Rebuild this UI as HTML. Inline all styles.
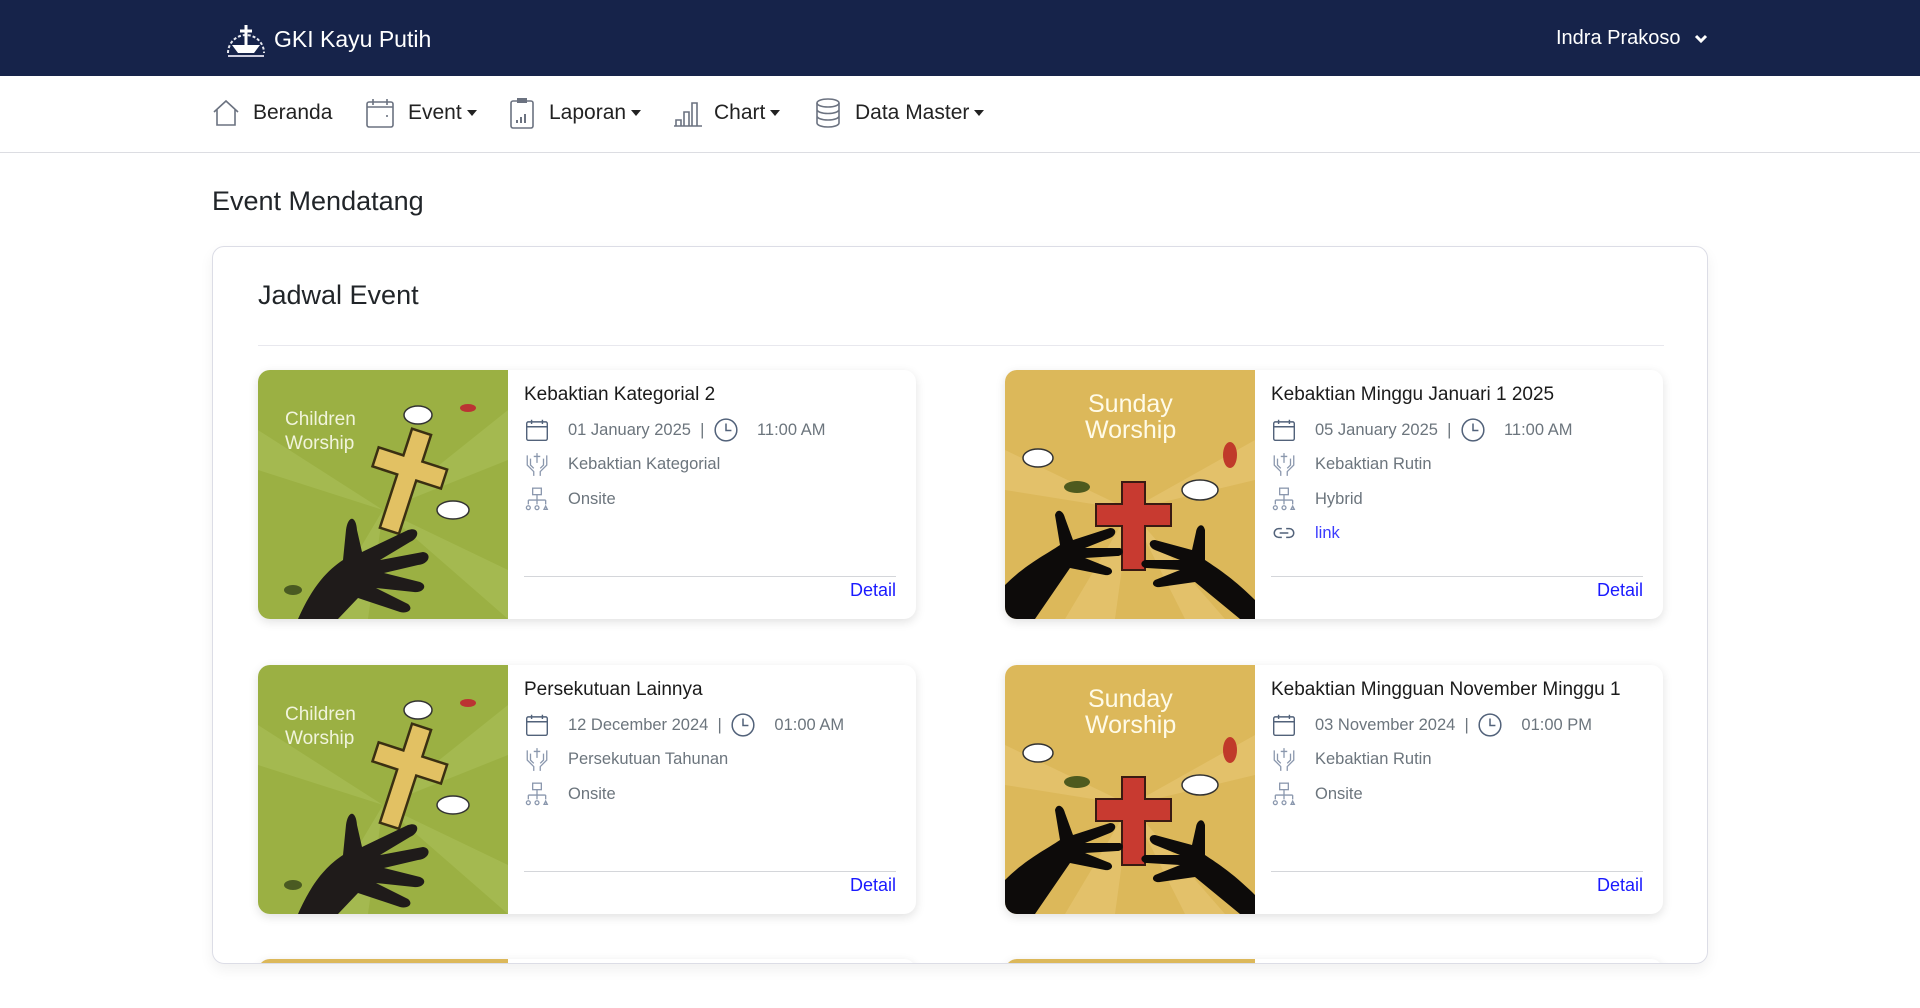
<!DOCTYPE html>
<html style="overflow:hidden"><head><meta charset="utf-8">
<style>
*{box-sizing:border-box;margin:0;padding:0}
html,body{width:1920px;height:1008px;overflow:hidden}
body{background:#fff;font-family:"Liberation Sans",sans-serif;color:#212529;position:relative}
.top{position:absolute;left:0;top:0;width:1920px;height:76px;background:#16234a;color:#fff}
.brand{position:absolute;left:224px;top:19px;display:flex;align-items:center;font-size:23px}
.user{position:absolute;left:1556px;top:26px;font-size:20px;line-height:24px}
.nav{position:absolute;left:0;top:76px;width:1920px;height:77px;border-bottom:1px solid #dcdde2}
.ni{position:absolute;top:25px;font-size:21px;color:#222;display:flex;align-items:center}
.ni svg{position:absolute}
.car{display:inline-block;border-left:5px solid transparent;border-right:5px solid transparent;border-top:6px solid #222;margin-left:5px;vertical-align:middle}
h1{position:absolute;left:212px;top:186px;font-size:27px;font-weight:400}
.box{position:absolute;left:212px;top:246px;width:1496px;height:718px;border:1px solid #dcdde6;border-radius:12px;overflow:hidden;box-shadow:0 6px 14px rgba(0,0,0,.06)}
.box h2{position:absolute;left:45px;top:33px;font-size:27px;font-weight:400}
.hr{position:absolute;left:45px;top:98px;width:1406px;height:1px;background:#e8e8ee}
.card{position:absolute;width:658px;height:249px;border-radius:12px;overflow:hidden;background:#fff;box-shadow:0 3px 10px rgba(0,0,0,.12)}
.card svg.img{position:absolute;left:0;top:0;width:250px;height:249px}
.t{position:absolute;left:266px;top:14px;font-size:19px;color:#1b1b1b}
.r{position:absolute;left:266px;font-size:16.5px;color:#6c757d;display:flex;align-items:center;height:24px}
.r svg{width:26px;height:26px;margin-right:18px}
.line{position:absolute;left:266px;top:206px;width:372px;height:1px;background:#d4d6da}
.det{position:absolute;right:20px;top:210px;font-size:18px;color:#1a1aff}
</style></head><body>
<svg width="0" height="0" style="position:absolute;left:0;top:0">
<defs>
<symbol id="green" viewBox="0 0 250 249">
<rect width="250" height="249" fill="#9bb043"/>
<path d="M125 140 L0 60 L0 100Z M125 140 L250 40 L250 90Z M125 140 L60 249 L110 249Z M125 140 L250 200 L250 249Z" fill="#a8bd56" opacity=".7"/>
<text x="27" y="55" fill="#f1f4dc" font-family="Liberation Sans" font-size="19">Children</text>
<text x="27" y="79" fill="#f1f4dc" font-family="Liberation Sans" font-size="19">Worship</text>
<g transform="rotate(18 150 110)"><path d="M138 60h20v28h26v20h-26v56h-20v-56h-26v-20h26z" fill="#e2c163" stroke="#3a2f12" stroke-width="2.5"/></g>
<path d="M40 249 C55 215 70 200 85 190 L88 160 C90 145 98 145 99 160 L104 182 L150 160 C162 156 162 168 152 172 L122 190 L165 182 C174 183 172 194 160 195 L126 203 L162 212 C170 215 166 223 156 222 L118 218 L150 234 C156 239 150 244 142 242 L100 228 L80 249Z" fill="#1f1b1a"/>
<g fill="#fff" stroke="#333" stroke-width="1.5"><ellipse cx="160" cy="45" rx="14" ry="9"/><ellipse cx="195" cy="140" rx="16" ry="9"/></g>
<ellipse cx="210" cy="38" rx="8" ry="4" fill="#b33" />
<ellipse cx="35" cy="220" rx="9" ry="5" fill="#4a5a22"/>
</symbol>
<symbol id="yellow" viewBox="0 0 250 249">
<rect width="250" height="249" fill="#dcb85a"/>
<path d="M125 140 L0 80 L0 120Z M125 140 L250 70 L250 110Z M125 140 L60 249 L110 249Z M125 140 L180 249 L220 249Z" fill="#e5c571" opacity=".7"/>
<text x="83" y="42" fill="#fffbe8" font-family="Liberation Sans" font-size="25">Sunday</text>
<text x="80" y="68" fill="#fffbe8" font-family="Liberation Sans" font-size="25">Worship</text>
<path d="M117 112h23v22h26v22h-26v44h-23v-44h-26v-22h26z" fill="#c83a30" stroke="#3a1a12" stroke-width="2"/>
<path d="M0 215 C20 195 40 185 55 175 L50 145 C52 138 58 140 60 148 L68 170 L105 158 C112 158 112 165 105 168 L80 178 L115 178 C120 180 118 186 112 186 L80 188 L105 198 C110 202 105 206 100 205 L65 198 L30 249 L0 249Z" fill="#0d0b0a"/>
<path d="M250 230 C230 210 215 200 200 190 L200 160 C198 152 192 155 191 162 L187 180 L150 170 C143 170 143 177 150 180 L175 190 L140 190 C134 192 136 198 142 198 L175 200 L150 210 C145 214 150 218 155 217 L190 212 L235 249 L250 249Z" fill="#0d0b0a"/>
<g fill="#fff" stroke="#333" stroke-width="1.5"><ellipse cx="33" cy="88" rx="15" ry="9"/><ellipse cx="195" cy="120" rx="18" ry="10"/></g>
<ellipse cx="225" cy="85" rx="7" ry="13" fill="#c03a2a"/>
<ellipse cx="72" cy="117" rx="13" ry="6" fill="#4e5a1e"/>
</symbol>
<symbol id="cal" viewBox="0 0 24 24"><rect x="2.5" y="4.5" width="19" height="17" rx="1.5" fill="none" stroke="#52627a" stroke-width="1.3"/><path d="M2.5 9h19M7 2.5v4M17 2.5v4" stroke="#52627a" stroke-width="1.3"/></symbol>
<symbol id="clk" viewBox="0 0 24 24"><circle cx="12" cy="12" r="10" fill="none" stroke="#52627a" stroke-width="1.4"/><path d="M12 6v6.5h5" fill="none" stroke="#52627a" stroke-width="1.4"/></symbol>
<symbol id="hand" viewBox="0 0 24 24"><g fill="none" stroke="#8a97ad" stroke-width="1.2"><path d="M12 2v9M9 5h6"/><path d="M3 4v9l6 6v4M21 4v9l-6 6v4M6 7v6l3 3M18 7v6l-3 3"/></g></symbol>
<symbol id="org" viewBox="0 0 24 24"><g fill="none" stroke="#8a97ad" stroke-width="1.2"><rect x="8" y="2" width="8" height="6"/><path d="M12 8v5M4 13h16M4 13v4M12 13v4M20 13v4"/><circle cx="4" cy="20" r="1.8"/><circle cx="12" cy="20" r="1.8"/><path d="M18.5 21.5h3l-1.5-3z"/></g></symbol>
<symbol id="lnk" viewBox="0 0 24 24"><g fill="none" stroke="#52627a" stroke-width="1.4"><path d="M10 8H7a4 4 0 000 8h3M14 8h3a4 4 0 010 8h-3M8 12h8"/></g></symbol>
</defs></svg>

<div class="top">
 <div class="brand"><svg width="44" height="40" viewBox="0 0 44 40"><g fill="none" stroke="#e6e8ef" stroke-width="2"><path d="M4 34 A18 18 0 0 1 40 34" stroke-dasharray="3 2"/></g><path d="M22 6v20M16 12h12" stroke="#fff" stroke-width="3"/><path d="M8 26 L36 26 L30 34 L14 34Z" fill="#fff"/><path d="M4 37h36" stroke="#ccd" stroke-width="2"/></svg><span style="margin-left:6px">GKI Kayu Putih</span></div>
 <div class="user">Indra Prakoso <svg width="14" height="10" viewBox="0 0 14 10" style="margin-left:8px"><path d="M2 2l5 5 5-5" fill="none" stroke="#fff" stroke-width="3"/></svg></div>
</div>

<div class="nav">
 <div class="ni" style="left:212px"><svg width="28" height="28" viewBox="0 0 28 28" style="left:0;top:-2px"><path d="M2 13 L14 2 L26 13 M5 10v16h18V10" fill="none" stroke="#6b7280" stroke-width="1.6"/></svg><span style="margin-left:41px">Beranda</span></div>
 <div class="ni" style="left:365px"><svg width="30" height="30" viewBox="0 0 30 30" style="left:0;top:-3px"><rect x="2" y="4" width="26" height="25" rx="2" fill="none" stroke="#6b7280" stroke-width="1.6"/><path d="M2 9h26M8 1v6M22 1v6M22 17v2" stroke="#6b7280" stroke-width="1.6"/></svg><span style="margin-left:43px">Event</span><span class="car"></span></div>
 <div class="ni" style="left:509px"><svg width="26" height="32" viewBox="0 0 26 32" style="left:0;top:-4px"><rect x="2" y="4" width="22" height="27" rx="2" fill="none" stroke="#6b7280" stroke-width="1.6"/><rect x="8" y="1" width="10" height="5" fill="#6b7280"/><path d="M8 26v-3M12 26v-6M16 26v-9" stroke="#6b7280" stroke-width="2"/></svg><span style="margin-left:40px">Laporan</span><span class="car"></span></div>
 <div class="ni" style="left:673px"><svg width="30" height="28" viewBox="0 0 30 28" style="left:0;top:-2px"><path d="M1 27h28M3 27v-6h5v6M11 27V13h5v14M19 27V4h5v23" fill="none" stroke="#6b7280" stroke-width="1.6"/></svg><span style="margin-left:41px">Chart</span><span class="car"></span></div>
 <div class="ni" style="left:815px"><svg width="26" height="30" viewBox="0 0 26 30" style="left:0;top:-3px"><g fill="none" stroke="#6b7280" stroke-width="1.6"><ellipse cx="13" cy="5" rx="11" ry="4"/><path d="M2 5v20c0 2.2 5 4 11 4s11-1.8 11-4V5M2 11.5c0 2.2 5 4 11 4s11-1.8 11-4M2 18c0 2.2 5 4 11 4s11-1.8 11-4"/></g></svg><span style="margin-left:40px">Data Master</span><span class="car"></span></div>
</div>

<h1>Event Mendatang</h1>

<div class="box">
 <h2>Jadwal Event</h2>
 <div class="hr"></div>

 <div class="card" style="left:45px;top:123px">
  <svg class="img"><use href="#green"/></svg>
  <div class="t">Kebaktian Kategorial 2</div>
  <div class="r" style="top:48px"><svg><use href="#cal"/></svg>01 January 2025&nbsp; |&nbsp; <svg style="margin:0 18px 0 4px"><use href="#clk"/></svg>11:00 AM</div>
  <div class="r" style="top:82px"><svg><use href="#hand"/></svg>Kebaktian Kategorial</div>
  <div class="r" style="top:117px"><svg><use href="#org"/></svg>Onsite</div>
  <div class="line"></div><div class="det">Detail</div>
 </div>

 <div class="card" style="left:792px;top:123px">
  <svg class="img"><use href="#yellow"/></svg>
  <div class="t">Kebaktian Minggu Januari 1 2025</div>
  <div class="r" style="top:48px"><svg><use href="#cal"/></svg>05 January 2025&nbsp; |&nbsp; <svg style="margin:0 18px 0 4px"><use href="#clk"/></svg>11:00 AM</div>
  <div class="r" style="top:82px"><svg><use href="#hand"/></svg>Kebaktian Rutin</div>
  <div class="r" style="top:117px"><svg><use href="#org"/></svg>Hybrid</div>
  <div class="r" style="top:151px"><svg><use href="#lnk"/></svg><span style="color:#3b3bff">link</span></div>
  <div class="line"></div><div class="det">Detail</div>
 </div>

 <div class="card" style="left:45px;top:418px">
  <svg class="img"><use href="#green"/></svg>
  <div class="t">Persekutuan Lainnya</div>
  <div class="r" style="top:48px"><svg><use href="#cal"/></svg>12 December 2024&nbsp; |&nbsp; <svg style="margin:0 18px 0 4px"><use href="#clk"/></svg>01:00 AM</div>
  <div class="r" style="top:82px"><svg><use href="#hand"/></svg>Persekutuan Tahunan</div>
  <div class="r" style="top:117px"><svg><use href="#org"/></svg>Onsite</div>
  <div class="line"></div><div class="det">Detail</div>
 </div>

 <div class="card" style="left:792px;top:418px">
  <svg class="img"><use href="#yellow"/></svg>
  <div class="t">Kebaktian Mingguan November Minggu 1</div>
  <div class="r" style="top:48px"><svg><use href="#cal"/></svg>03 November 2024&nbsp; |&nbsp; <svg style="margin:0 18px 0 4px"><use href="#clk"/></svg>01:00 PM</div>
  <div class="r" style="top:82px"><svg><use href="#hand"/></svg>Kebaktian Rutin</div>
  <div class="r" style="top:117px"><svg><use href="#org"/></svg>Onsite</div>
  <div class="line"></div><div class="det">Detail</div>
 </div>

 <div class="card" style="left:45px;top:712px"><svg class="img"><use href="#yellow"/></svg></div>
 <div class="card" style="left:792px;top:712px"><svg class="img"><use href="#yellow"/></svg></div>
</div>
</body></html>
